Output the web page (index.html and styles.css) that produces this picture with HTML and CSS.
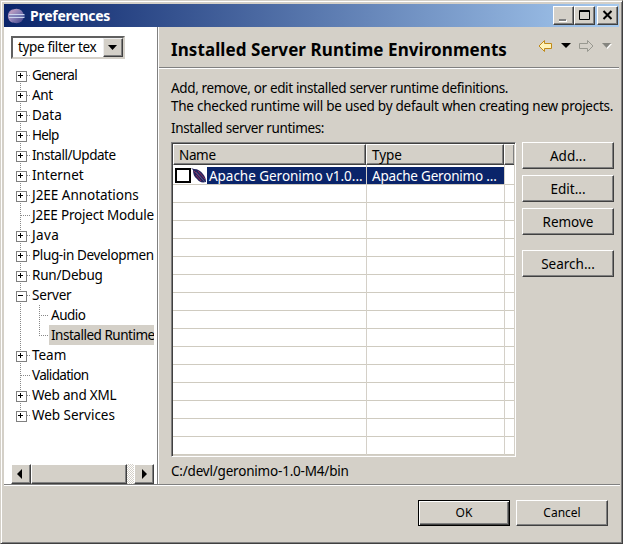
FILE: index.html
```
<!DOCTYPE html>
<html lang="en">
<head>
<meta charset="utf-8">
<title>Preferences</title>
<link rel="stylesheet" href="styles.css">
</head>
<body>
<div class="window">
  <header class="titlebar">
    <svg class="logo" width="18" height="16" viewBox="0 0 18 16">
      <defs><linearGradient id="orb" x2="1" y2="1"><stop offset="0" stop-color="#d3a9c4"/><stop offset=".45" stop-color="#8e83b8"/><stop offset="1" stop-color="#3b3e86"/></linearGradient></defs>
      <path d="M6 1a8 7.5 0 0 0 0 14A11 11 0 0 1 6 1z" fill="#a58dbb"/>
      <circle cx="9.5" cy="8" r="7.3" fill="url(#orb)"/>
      <path d="M2 6.5h15.5M2 9.5h15.5" stroke="#c9d3ee"/><path d="M2 8h16" stroke="#6f7fb8"/>
    </svg>
    <h1>Preferences</h1>
    <div class="controls">
      <button class="ctl" aria-label="Minimize"><svg width="20" height="18"><path d="M5 13h8v2H5z" fill="#fff"/><path d="M5 12h7v2H5z" fill="#808080"/></svg></button>
      <button class="ctl" aria-label="Maximize"><svg width="20" height="18"><path d="M4.500 3.500h10v9h-10zM4 4.500h11" fill="none" stroke="#000"/></svg></button>
      <button class="ctl close" aria-label="Close"><svg width="20" height="18"><path d="M5.500 4l8 8M13.500 4l-8 8" fill="none" stroke="#000" stroke-width="2"/></svg></button>
    </div>
  </header>
  <div class="main">
    <aside class="side">
      <div class="combo"><span>type filter tex</span><i class="drop"><svg width="17" height="18"><path d="M4 6h9l-4.500 5z"/></svg></i></div>
      <ul class="tree">
        <li class="plus first"><span class="tighter">General</span></li>
        <li class="plus"><span>Ant</span></li>
        <li class="plus"><span class="normal">Data</span></li>
        <li class="plus"><span class="tighter">Help</span></li>
        <li class="plus"><span class="tight">Install/Update</span></li>
        <li class="plus"><span class="normal">Internet</span></li>
        <li class="plus"><span class="normal">J2EE Annotations</span></li>
        <li><span class="snug">J2EE Project Module</span></li>
        <li class="plus"><span class="wide">Java</span></li>
        <li class="plus"><span>Plug-in Developmen</span></li>
        <li class="plus"><span class="snug">Run/Debug</span></li>
        <li class="plus minus"><span class="snug">Server</span></li>
        <li class="child"><span class="tight">Audio</span></li>
        <li class="child end"><span class="chosen tight">Installed Runtime</span></li>
        <li class="plus"><span class="normal">Team</span></li>
        <li><span class="tighter">Validation</span></li>
        <li class="plus"><span class="snug">Web and XML</span></li>
        <li class="plus last"><span class="normal">Web Services</span></li>
      </ul>
      <div class="scroll"><i class="arrow"><svg width="18" height="18"><path d="M10 4v10L5 9z"/></svg></i><i class="thumb"></i><i class="arrow right"><svg width="18" height="18"><path d="M7 4v10l5-5z"/></svg></i></div>
    </aside>
    <section class="page">
      <div class="heading">
        <h2>Installed Server Runtime Environments</h2>
        <svg class="nav" width="76" height="16" viewBox="0 0 76 16">
          <path d="M1 8l5.500-5.500v3h7v5h-7v3z" fill="#fff3b8" stroke="#c08a18"/>
          <path d="M23 5h10l-5 5z"/>
          <path d="M55 8l-5.500-5.500v3h-8v5h8v3z" fill="none" stroke="#989890"/>
          <path d="M65 6h9l-4.500 5z" fill="#fff"/><path d="M64 5h9l-4.500 5z" fill="#85857f"/>
        </svg>
      </div>
      <div class="body">
        <p class="desc"><span>Add, remove, or edit installed server runtime definitions.</span></p>
        <p class="desc two"><span>The checked runtime will be used by default when creating new projects.</span></p>
        <p class="label"><span>Installed server runtimes:</span></p>
        <div class="content">
          <div class="table">
            <div class="thead"><b class="name"><span>Name</span></b><b class="type"><span class="normal">Type</span></b><b class="rest"></b></div>
            <div class="rows">
              <div class="row"><i class="check"></i>
                <svg class="feather" width="16" height="17" viewBox="0 0 16 17"><path d="M0 1l3 1c4 0 7 2 9 5 2 2 3 5 3 8-4 1-7 0-9-3-3-2-4-5-4-9z" fill="#26245e"/><path d="M3 4l10 10M5 8l5 6M7 4l7 8" stroke="#8d2d58"/><path d="M5 5l9 10" stroke="#3e558c"/></svg>
                <span class="cell c1 normal">Apache Geronimo v1.0...</span><span class="cell c2 snug">Apache Geronimo ...</span></div>
            </div>
          </div>
          <div class="actions"><button class="btn">Add...</button><button class="btn">Edit...</button><button class="btn">Remove</button><button class="btn search">Search...</button></div>
        </div>
        <p class="path"><span class="snug">C:/devl/geronimo-1.0-M4/bin</span></p>
      </div>
    </section>
  </div>
  <footer class="footer"><button class="btn ok">OK</button><button class="btn cancel">Cancel</button></footer>
</div>
</body>
</html>
```
FILE: styles.css
```
* { box-sizing: border-box; margin: 0; padding: 0; }
body { width: 623px; height: 544px; overflow: hidden; font: 13.5px/20px "Noto Sans", sans-serif; color: #000; background: #d4d0c8; }
svg { display: block; flex: none; }
i, b { font-style: normal; font-weight: normal; }
span { white-space: nowrap; letter-spacing: -.36px; }
.normal { letter-spacing: -.03px; }
.wide { letter-spacing: .4px; }
.snug { letter-spacing: -.2px; }
.tight { letter-spacing: -.48px; }
.tighter { letter-spacing: -.68px; }
button { font: inherit; color: inherit; }
.window { width: 623px; height: 544px; background: #d4d0c8; border: 1px solid #404040; border-left-color: #d4d0c8; border-top-color: #d4d0c8; box-shadow: inset 1px 1px #fff, inset -1px -1px #808080; padding: 3px 2px 2px 3px; display: flex; flex-direction: column; }
.titlebar { height: 23px; flex: none; display: flex; align-items: center; padding: 0 1px 0 3px; margin-right: 1px; background: linear-gradient(90deg, #0a246a, #a6caf0); }
h1 { font-size: 14px; line-height: 23px; color: #fff; margin-left: 5px; flex: 1; letter-spacing: -.25px; }
.controls { display: flex; }
.ctl { width: 21px; height: 19px; border: 1px solid #404040; border-left-color: #fff; border-top-color: #fff; box-shadow: inset -1px -1px #808080; background: #d4d0c8; }
.close { margin-left: 2px; }
.main { height: 457px; flex: none; display: flex; }
.side { width: 153px; background: #fff; padding: 9px 3px 0 7px; display: flex; flex-direction: column; flex: none; }
.combo { width: 114px; height: 23px; display: flex; border: 2px solid #404040; border-color: #606060 #d4d0c8 #d4d0c8 #606060; }
.combo span { flex: 1; line-height: 19px; padding-left: 5px; }
.drop { width: 20px; height: 19px; background: #d4d0c8; border: 1px solid #404040; border-left-color: #eee; border-top-color: #eee; box-shadow: inset -1px -1px #808080; }
.tree { list-style: none; margin-top: 6px; height: 399px; overflow: hidden; }
.tree li { height: 20px; line-height: 20px; padding-left: 21px; background: repeating-linear-gradient(180deg, #888 0 1px, transparent 1px 2px) 9px 0 / 1px 100% no-repeat, repeating-linear-gradient(90deg, #888 0 1px, transparent 1px 2px) 10px 10px / 9px 1px no-repeat; display: flex; position: relative; }
.tree .plus::before { content: ""; position: absolute; left: 5px; top: 6px; width: 9px; height: 9px; border: 1px solid #808080; background: linear-gradient(#000, #000) 1px 3px / 5px 1px no-repeat, linear-gradient(#000, #000) 3px 1px / 1px 5px no-repeat, #fff; }
.tree .minus::before { background: linear-gradient(#000, #000) 1px 3px / 5px 1px no-repeat, #fff; }
.tree .first { background-position: 9px 10px, 10px 10px; }
.tree .last { background-size: 1px 10px, 9px 1px; }
.tree .child { padding-left: 38px; background: repeating-linear-gradient(180deg, #888 0 1px, transparent 1px 2px) 9px 0 / 1px 100% no-repeat, repeating-linear-gradient(180deg, #888 0 1px, transparent 1px 2px) 28px 0 / 1px 100% no-repeat, repeating-linear-gradient(90deg, #888 0 1px, transparent 1px 2px) 28px 10px / 9px 1px no-repeat; }
.tree .child span { padding-left: 2px; flex: 1; }
.tree .end { background-size: 1px 100%, 1px 10px, 9px 1px; }
.chosen { background: #d4d0c8; }
.scroll { height: 20px; display: flex; background: repeating-conic-gradient(#d4d0c8 0 25%, #fff 0 50%) 0 0 / 2px 2px; }
.arrow, .thumb { width: 20px; height: 20px; background: #d4d0c8; border: 1px solid #404040; border-left-color: #fff; border-top-color: #fff; box-shadow: inset -1px -1px #808080; }
.thumb { width: 96px; }
.right { margin-left: auto; }
.page { flex: 1; border-left: 1px solid #808080; box-shadow: inset 1px 0 #fff; min-width: 0; }
.heading { height: 42px; margin-left: 1px; margin-right: 1px; padding: 0 5px 0 12px; display: flex; justify-content: space-between; border-bottom: 1px solid #fff; box-shadow: inset 0 -1px #808080; }
h2 { font-size: 17px; line-height: 45px; letter-spacing: .08px; white-space: nowrap; }
.nav { margin: 11px 0 0; }
.body { padding: 11px 6px 0 13px; }
.desc { height: 17px; line-height: 17px; }
.two { margin-top: 1px; }
.two span { letter-spacing: -.25px; }
.label { margin-top: 4px; height: 18px; line-height: 18px; }
.content { display: flex; justify-content: space-between; margin-top: 5px; }
.table { width: 345px; height: 315px; border: 1px solid #808080; border-right-color: #fff; border-bottom-color: #fff; box-shadow: inset 1px 1px #404040, inset -1px -1px #d4d0c8; padding: 1px; }
.thead { height: 21px; display: flex; line-height: 21px; }
.thead b { background: #d4d0c8; border: 1px solid #404040; border-left-color: #fff; border-top-color: #fff; box-shadow: inset -1px -1px #808080; padding-left: 5px; line-height: 21px; }
.name { width: 193px; }
.type { width: 138px; }
.thead .rest { flex: 1; border-right: 0; padding: 0; }
.rows { height: 290px; padding-top: 2px; background: linear-gradient(#d4d0c8, #d4d0c8) 193px 0 / 1px 100% no-repeat, linear-gradient(#d4d0c8, #d4d0c8) 331px 0 / 1px 100% no-repeat, repeating-linear-gradient(180deg, transparent 0 17px, #cfcbc0 17px 18px) 0 2px, #fff; }
.row { display: flex; height: 17px; line-height: 18px; color: #fff; }
.check { width: 16px; height: 15px; border: 2px solid #000; margin: 1px 0 0 2px; background: #fff; flex: none; }
.cell { background: #0a246a; height: 17px; padding-left: 2px; overflow: hidden; }
.c1 { width: 159px; }
.c2 { width: 137px; margin-left: 1px; padding-left: 5px; }
.actions { width: 92px; display: flex; flex-direction: column; gap: 6px; }
.btn { width: 92px; height: 27px; background: #d4d0c8; border: 1px solid #404040; border-left-color: #fff; border-top-color: #fff; box-shadow: inset -1px -1px #808080; line-height: 24px; padding-bottom: 0; }
.search { margin-top: 9px; }
.path { height: 20px; margin-top: 4px; }
.footer { flex: 1; border-top: 1px solid #808080; box-shadow: inset 0 1px #fff; display: flex; justify-content: flex-end; gap: 6px; padding: 15px 12px 0 0; font-size: 12px; }
.footer .btn { height: 26px; line-height: 23px; padding-bottom: 1px; }
.footer .ok { border: 1px solid #000; box-shadow: inset 1px 1px #fff, inset -1px -1px #404040, inset -2px -2px #808080; }
```
